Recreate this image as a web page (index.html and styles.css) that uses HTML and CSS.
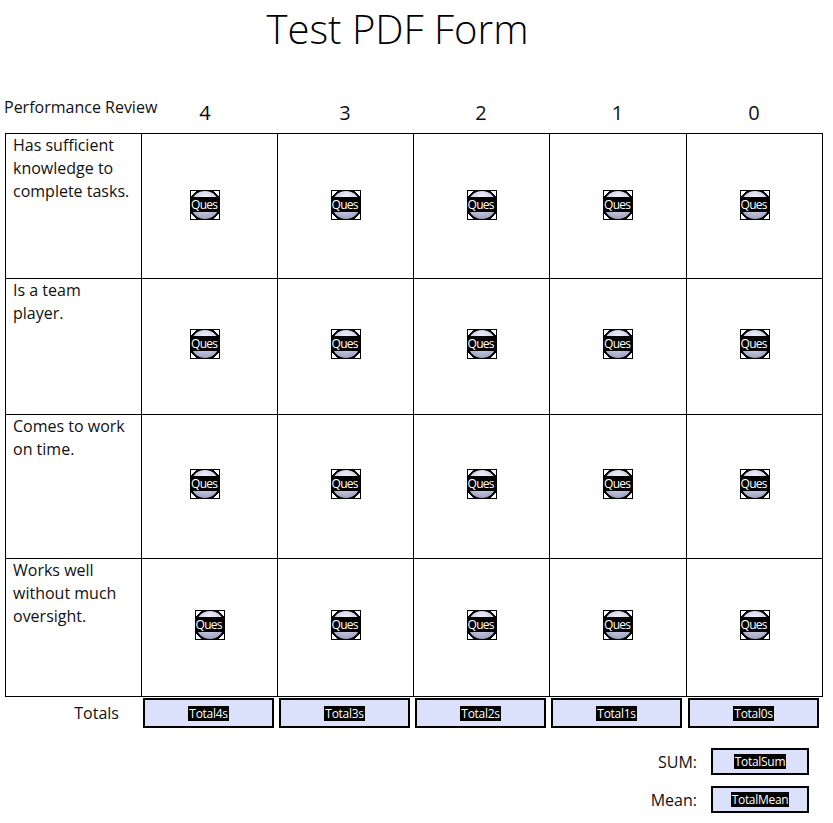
FILE: index.html
```html
<!DOCTYPE html>
<html lang="en">
<head>
<meta charset="utf-8">
<title>Test PDF Form</title>
<link rel="stylesheet" href="styles.css">
</head>
<body>
<h1 class="title">Test PDF Form</h1>
<div class="head">
  <div class="head-label">Performance Review</div>
  <div class="num n4">4</div>
  <div class="num">3</div>
  <div class="num">2</div>
  <div class="num">1</div>
  <div class="num">0</div>
</div>
<div class="grid">
  <div class="q r1">Has sufficient knowledge to complete tasks.</div>
  <div class="cell r1 c1"><span class="radio"><span class="lbl">Ques</span></span></div>
  <div class="cell r1"><span class="radio"><span class="lbl">Ques</span></span></div>
  <div class="cell r1"><span class="radio"><span class="lbl">Ques</span></span></div>
  <div class="cell r1"><span class="radio"><span class="lbl">Ques</span></span></div>
  <div class="cell r1"><span class="radio"><span class="lbl">Ques</span></span></div>

  <div class="q r2">Is a team player.</div>
  <div class="cell r2 c1"><span class="radio"><span class="lbl">Ques</span></span></div>
  <div class="cell r2"><span class="radio"><span class="lbl">Ques</span></span></div>
  <div class="cell r2"><span class="radio"><span class="lbl">Ques</span></span></div>
  <div class="cell r2"><span class="radio"><span class="lbl">Ques</span></span></div>
  <div class="cell r2"><span class="radio"><span class="lbl">Ques</span></span></div>

  <div class="q r3">Comes to work on time.</div>
  <div class="cell r3 c1"><span class="radio"><span class="lbl">Ques</span></span></div>
  <div class="cell r3"><span class="radio"><span class="lbl">Ques</span></span></div>
  <div class="cell r3"><span class="radio"><span class="lbl">Ques</span></span></div>
  <div class="cell r3"><span class="radio"><span class="lbl">Ques</span></span></div>
  <div class="cell r3"><span class="radio"><span class="lbl">Ques</span></span></div>

  <div class="q r4">Works well without much oversight.</div>
  <div class="cell r4"><span class="radio"><span class="lbl">Ques</span></span></div>
  <div class="cell r4"><span class="radio"><span class="lbl">Ques</span></span></div>
  <div class="cell r4"><span class="radio"><span class="lbl">Ques</span></span></div>
  <div class="cell r4"><span class="radio"><span class="lbl">Ques</span></span></div>
  <div class="cell r4"><span class="radio"><span class="lbl">Ques</span></span></div>
</div>
<div class="totals">
  <div class="totals-label">Totals</div>
  <div class="field"><span class="ftext">Total4s</span></div>
  <div class="field"><span class="ftext">Total3s</span></div>
  <div class="field"><span class="ftext">Total2s</span></div>
  <div class="field"><span class="ftext">Total1s</span></div>
  <div class="field"><span class="ftext">Total0s</span></div>
</div>
<div class="summary">
  <div class="sum-label">SUM:</div>
  <div class="field small"><span class="ftext">TotalSum</span></div>
  <div class="sum-label">Mean:</div>
  <div class="field small"><span class="ftext">TotalMean</span></div>
</div>
</body>
</html>
```

FILE: styles.css
```css
* { box-sizing: border-box; }
html, body { margin: 0; padding: 0; background: #fff; }
body {
  width: 833px;
  font-family: "Open Sans", "Noto Sans", sans-serif;
  color: #111;
}
.title {
  margin: 0;
  height: 60px;
  line-height: 58px;
  text-align: center;
  font-size: 40px;
  font-weight: 300;
  color: #000;
  padding-right: 38px;
}
.head {
  display: grid;
  grid-template-columns: 136px 136px 136px 136px 137px 136px;
  margin-left: 5px;
  height: 73px;
  align-items: end;
}
.head-label {
  font-size: 16px;
  padding-bottom: 15px;
  white-space: nowrap;
  margin-left: -1px;
}
.num {
  font-size: 20px;
  text-align: center;
  padding-bottom: 7px;
  color: #111;
}
.num.n4 { padding-right: 8px; color: #000; font-weight: 500; }
.grid {
  display: grid;
  grid-template-columns: 135px 135px 135px 135px 136px 135px;
  grid-template-rows: 144px 135px 143px 137px;
  gap: 1px;
  padding: 1px;
  background: #000;
  margin-left: 5px;
  width: 818px;
}
.q {
  background: #fff;
  font-size: 16px;
  line-height: 23px;
  padding: 0 8px 0 7px;
}
.cell {
  background: #fff;
  display: flex;
  align-items: center;
  justify-content: center;
  padding-bottom: 6px;
}
.cell.c1 { padding-right: 9px; }
.cell.r1 { padding-bottom: 3px; }
.radio {
  position: relative;
  display: block;
  width: 30px;
  height: 30px;
  background:
    linear-gradient(135deg, #fff 4px, transparent 4px) left 1px top 1px / 6px 6px no-repeat,
    linear-gradient(225deg, #fff 4px, transparent 4px) right 1px top 1px / 6px 6px no-repeat,
    linear-gradient(45deg, #fff 4px, transparent 4px) left 1px bottom 1px / 6px 6px no-repeat,
    linear-gradient(315deg, #fff 4px, transparent 4px) right 1px bottom 1px / 6px 6px no-repeat,
    #000;
}
.radio::before {
  content: "";
  position: absolute;
  left: 1px;
  top: 1px;
  width: 28px;
  height: 28px;
  border-radius: 50%;
  background: radial-gradient(circle at 50% 28%, #f6f6fc 0%, #cdd0e6 45%, #9a9eba 85%, #74778f 100%);
}
.lbl {
  position: absolute;
  left: 1px;
  right: 1px;
  top: 7px;
  height: 15px;
  background: #000;
  color: #fff;
  font-size: 12px;
  line-height: 15px;
  white-space: nowrap;
  padding-left: 0;
  letter-spacing: -0.7px;
}
.totals {
  display: grid;
  grid-template-columns: 136px 136px 136px 136px 137px 136px;
  margin-left: 5px;
  margin-top: 1px;
  height: 30px;
  align-items: center;
}
.totals-label {
  font-size: 16px;
  text-align: right;
  padding-right: 22px;
}
.field {
  width: 131px;
  height: 30px;
  margin-left: 2px;
  border: 2px solid #000;
  background: #dbe1fb;
  display: flex;
  align-items: center;
  justify-content: center;
}
.ftext {
  background: #000;
  color: #fff;
  font-size: 12px;
  line-height: 15px;
  padding: 0 1px;
  letter-spacing: -0.3px;
}
.summary {
  display: grid;
  grid-template-columns: auto 98px;
  column-gap: 14px;
  row-gap: 11px;
  justify-content: end;
  align-items: center;
  margin-top: 20px;
  margin-right: 24px;
}
.sum-label {
  font-size: 16px;
  text-align: right;
}
.field.small {
  width: 98px;
  height: 27px;
  margin-left: 0;
}
```
